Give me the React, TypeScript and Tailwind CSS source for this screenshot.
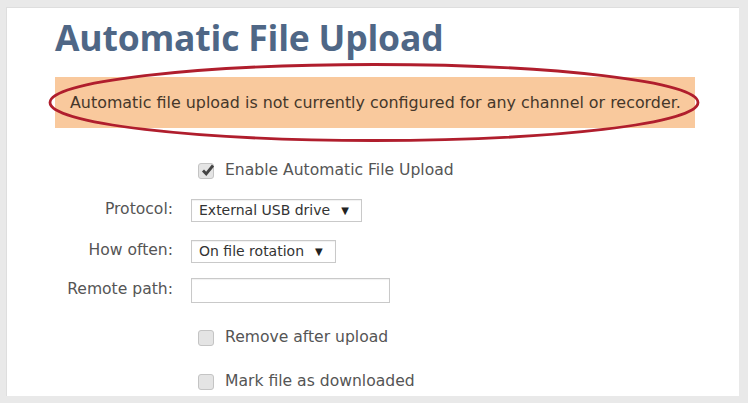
import React from "react";

const body = { fontFamily: '"DejaVu Sans", Verdana, sans-serif' };
const head = { fontFamily: '"Open Sans", "DejaVu Sans", sans-serif' };

const Check: React.FC<{ checked?: boolean }> = ({ checked }) => (
  <span className="relative flex h-[16px] w-[16px] shrink-0 items-center justify-center rounded-[3px] border border-[#c4c4c4] bg-[#e4e4e4]">
    {checked && (
      <svg viewBox="0 0 16 16" className="absolute -top-[2px] left-[1px] h-[16px] w-[16px]">
        <path d="M3 8.5 L6.2 11.8 L13 3.5" fill="none" stroke="#444" strokeWidth="2.8" />
      </svg>
    )}
  </span>
);

const Select: React.FC<{ value: string; width: string }> = ({ value, width }) => (
  <div className={`flex h-[23px] items-center border border-[#c9c9c9] bg-white pl-[7px] text-[14px] text-[#333] shadow-[inset_0_1px_1px_rgba(0,0,0,0.06)] ${width}`}>
    <span>{value}</span>
    <span className="ml-[11px] text-[10px] text-[#222]">▼</span>
  </div>
);

const Row: React.FC<{ label?: string; mt: string; children: React.ReactNode }> = ({ label, mt, children }) => (
  <div className={`flex h-[30px] items-center gap-[18px] ${mt}`}>
    <div className="w-[118px] whitespace-nowrap text-right text-[15.6px] text-[#555]">{label}</div>
    {children}
  </div>
);

const CheckRow: React.FC<{ text: string; checked?: boolean; mt: string }> = ({ text, checked, mt }) => (
  <Row mt={mt}>
    <div className="flex items-center gap-[11px] pl-[7px]">
      <Check checked={checked} />
      <span className="whitespace-nowrap text-[15.6px] text-[#555]">{text}</span>
    </div>
  </Row>
);

export default function App() {
  return (
    <div className="h-[403px] w-[748px] bg-[#e9e9e9] pb-[7px] pl-[6px] pr-[9px] pt-[7px]" style={body}>
      <div className="h-full border-l border-t border-[#dedede] bg-white pl-[48px] pt-[9px]">
        <h1 className="text-[35.5px] font-bold leading-[40px] tracking-[-0.2px] text-[#4f6786]" style={head}>
          Automatic File Upload
        </h1>

        <div className="relative mt-[20px] flex h-[51px] w-[640px] items-center whitespace-nowrap bg-[#f9c99d] pl-[15px] text-[15.9px] text-[#45372a]">
          Automatic file upload is not currently configured for any channel or recorder.
          <svg className="pointer-events-none absolute -left-[10px] -top-[17px] h-[85px] w-[660px] overflow-visible" viewBox="0 0 660 85">
            <ellipse cx="329" cy="42.5" rx="324" ry="38" fill="none" stroke="#b01e2d" strokeWidth="2.8" />
          </svg>
        </div>

        <div className="flex flex-col">
          <CheckRow text="Enable Automatic File Upload" checked mt="mt-[28px]" />
          <Row label="Protocol:" mt="mt-[9px]">
            <Select value="External USB drive" width="w-[171px]" />
          </Row>
          <Row label="How often:" mt="mt-[11px]">
            <Select value="On file rotation" width="w-[145px]" />
          </Row>
          <Row label="Remote path:" mt="mt-[9px]">
            <div className="h-[25px] w-[199px] border border-[#c9c9c9] bg-white shadow-[inset_0_1px_1px_rgba(0,0,0,0.06)]" />
          </Row>
          <CheckRow text="Remove after upload" mt="mt-[18px]" />
          <CheckRow text="Mark file as downloaded" mt="mt-[14px]" />
        </div>
      </div>
    </div>
  );
}
